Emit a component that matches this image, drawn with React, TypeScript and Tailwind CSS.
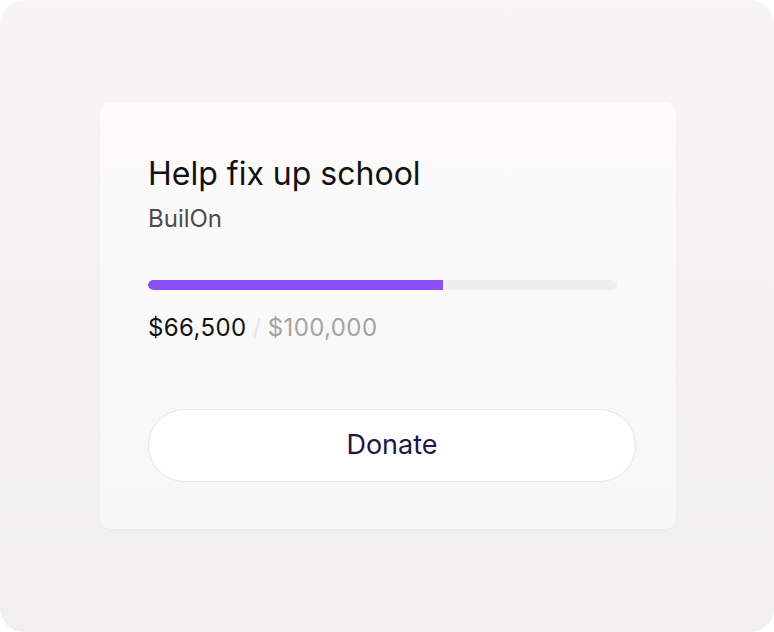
import React from 'react';

const raised = 66500;
const goal = 100000;

function App() {
  const pct = (raised / goal) * 100 * 0.947;

  return (
    <div className="w-[774px] h-[632px] bg-white" style={{ fontFamily: 'Inter, "Noto Sans", sans-serif' }}>
      <div className="w-full h-full rounded-[24px] bg-gradient-to-b from-[#f7f6f3] to-[#f1eff0] pt-[102px] pl-[100px]">
        {/* Card */}
        <div className="w-[576px] h-[427px] rounded-[10px] bg-gradient-to-b from-[#fcfbfa] to-[#f8f7f8] shadow-[0_1px_3px_rgba(0,0,0,0.03)] pt-[52px] pl-[48px]">
          <h1 className="text-[32px] leading-[40px] text-[#111111]">Help fix up school</h1>
          <p className="mt-[9px] text-[24px] leading-[32px] text-[#4b4b4b]">BuilOn</p>

          <div className="mt-[45px] w-[469px] h-[10px] rounded-full bg-[#efeeef] overflow-hidden">
            <div className="h-full bg-[#8b4ef7] rounded-l-full" style={{ width: `${pct}%` }} />
          </div>

          <div className="mt-[22px] text-[24px] leading-[32px] tracking-[0.4px]">
            <span className="text-[#111111]">$66,500</span>
            <span className="text-[#e4e3e4] mx-[6px]">/</span>
            <span className="text-[#a3a3a3]">$100,000</span>
          </div>

          <button className="mt-[65px] w-[488px] h-[73px] rounded-full bg-white border border-[#e6e4e6] text-[27px] text-[#1e1646]">
            Donate
          </button>
        </div>
      </div>
    </div>
  );
}

export default App;
